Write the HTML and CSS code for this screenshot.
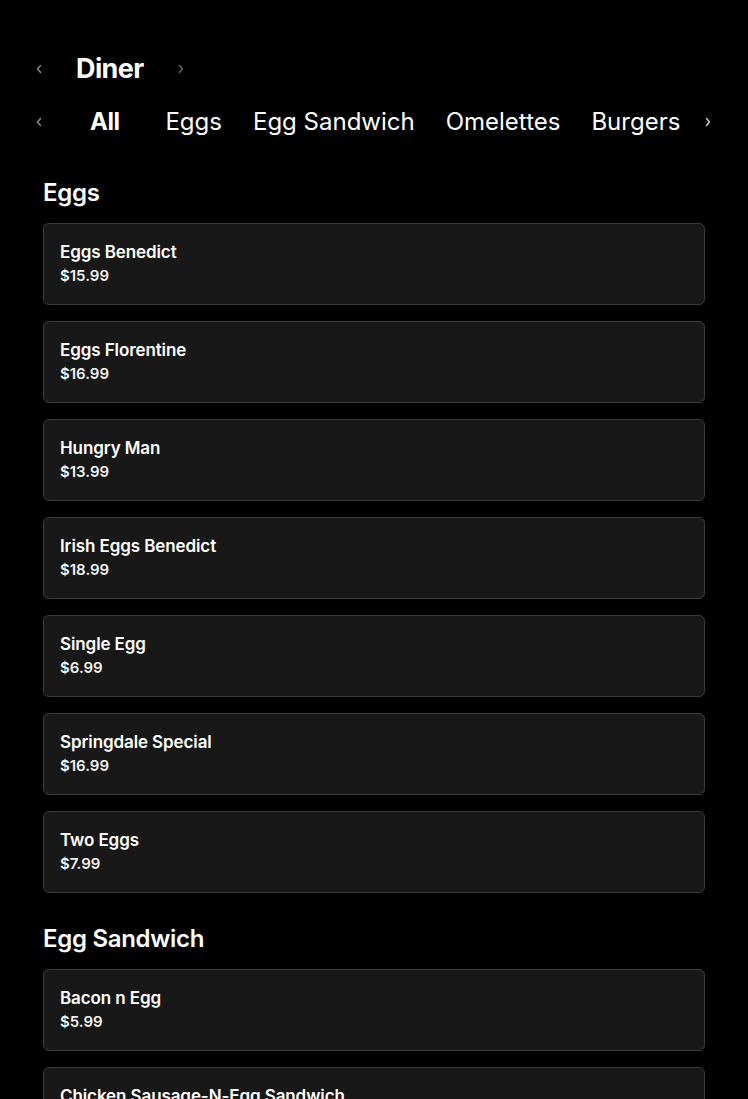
FILE: index.html
```html
<!DOCTYPE html>
<html>
<head>
<meta charset="utf-8">
<link rel="stylesheet" href="styles.css">
</head>
<body>
<div class="page">
  <div class="menu-row">
    <span class="chev"><svg width="8" height="10" viewBox="0 0 8 10"><path d="M5.5 1.5 L2.5 5 L5.5 8.5" fill="none" stroke="#8a8a8a" stroke-width="1.4" stroke-linecap="round" stroke-linejoin="round"/></svg></span>
    <h1 class="menu-title">Diner</h1>
    <span class="chev"><svg width="8" height="10" viewBox="0 0 8 10"><path d="M2.5 1.5 L5.5 5 L2.5 8.5" fill="none" stroke="#6a6a6a" stroke-width="1.4" stroke-linecap="round" stroke-linejoin="round"/></svg></span>
  </div>
  <div class="tabs-row">
    <span class="chev"><svg width="8" height="10" viewBox="0 0 8 10"><path d="M5.5 1.5 L2.5 5 L5.5 8.5" fill="none" stroke="#8a8a8a" stroke-width="1.4" stroke-linecap="round" stroke-linejoin="round"/></svg></span>
    <div class="tabs">
      <span class="tab active">All</span>
      <span class="tab">Eggs</span>
      <span class="tab">Egg Sandwich</span>
      <span class="tab">Omelettes</span>
      <span class="tab">Burgers</span>
    </div>
    <span class="chev"><svg width="8" height="10" viewBox="0 0 8 10"><path d="M2.5 1.5 L5.5 5 L2.5 8.5" fill="none" stroke="#d0d0d0" stroke-width="1.4" stroke-linecap="round" stroke-linejoin="round"/></svg></span>
  </div>

  <section class="section">
    <h2 class="section-title">Eggs</h2>
    <div class="items">
      <div class="card"><div class="name">Eggs Benedict</div><div class="price">$15.99</div></div>
      <div class="card"><div class="name">Eggs Florentine</div><div class="price">$16.99</div></div>
      <div class="card"><div class="name">Hungry Man</div><div class="price">$13.99</div></div>
      <div class="card"><div class="name">Irish Eggs Benedict</div><div class="price">$18.99</div></div>
      <div class="card"><div class="name">Single Egg</div><div class="price">$6.99</div></div>
      <div class="card"><div class="name">Springdale Special</div><div class="price">$16.99</div></div>
      <div class="card"><div class="name">Two Eggs</div><div class="price">$7.99</div></div>
    </div>
  </section>

  <section class="section">
    <h2 class="section-title">Egg Sandwich</h2>
    <div class="items">
      <div class="card"><div class="name">Bacon n Egg</div><div class="price">$5.99</div></div>
      <div class="card"><div class="name">Chicken Sausage-N-Egg Sandwich</div><div class="price">$6.99</div></div>
    </div>
  </section>
</div>
</body>
</html>
```
FILE: styles.css
```css
html, body {
  margin: 0;
  padding: 0;
  background: #000;
  color: #fff;
  font-family: "Inter", "Lato", "Liberation Sans", sans-serif;
}
.page {
  padding: 52px 0 0 0;
}
.menu-row {
  display: flex;
  align-items: center;
  height: 34px;
  padding-left: 35px;
}
.chev {
  display: flex;
  align-items: center;
  justify-content: center;
  width: 8px;
  height: 10px;
}
.menu-title {
  margin: 0 33px 0 33px;
  font-size: 27px;
  font-weight: 700;
  letter-spacing: -0.6px;
  line-height: 34px;
}
.tabs-row {
  display: flex;
  align-items: center;
  margin-top: 19px;
  height: 34px;
  padding-left: 35px;
}
.tabs {
  display: flex;
  gap: 31px;
  margin-left: 47px;
  margin-right: 24px;
}
.tab {
  font-size: 24px;
  font-weight: 400;
  line-height: 34px;
  white-space: nowrap;
}
.tab.active {
  font-weight: 700;
  margin-right: 15px;
  letter-spacing: -0.5px;
}
.tab.wide {
  letter-spacing: 0;
}
.section {
  padding: 0 43px;
}
.section:first-of-type {
  margin-top: 38px;
}
.section + .section {
  margin-top: 30px;
}
.section-title {
  margin: 0 0 14px 0;
  font-size: 24px;
  font-weight: 600;
  line-height: 32px;
  letter-spacing: -0.3px;
}
.items {
  display: flex;
  flex-direction: column;
  gap: 16px;
}
.card {
  background: #181818;
  border: 1px solid #3c3c3c;
  border-radius: 6px;
  padding: 16px 16px;
}
.name {
  font-size: 17px;
  font-weight: 600;
  line-height: 24px;
  letter-spacing: -0.1px;
}
.price {
  font-size: 15px;
  font-weight: 600;
  line-height: 24px;
  color: #f2f2f2;
}
```
